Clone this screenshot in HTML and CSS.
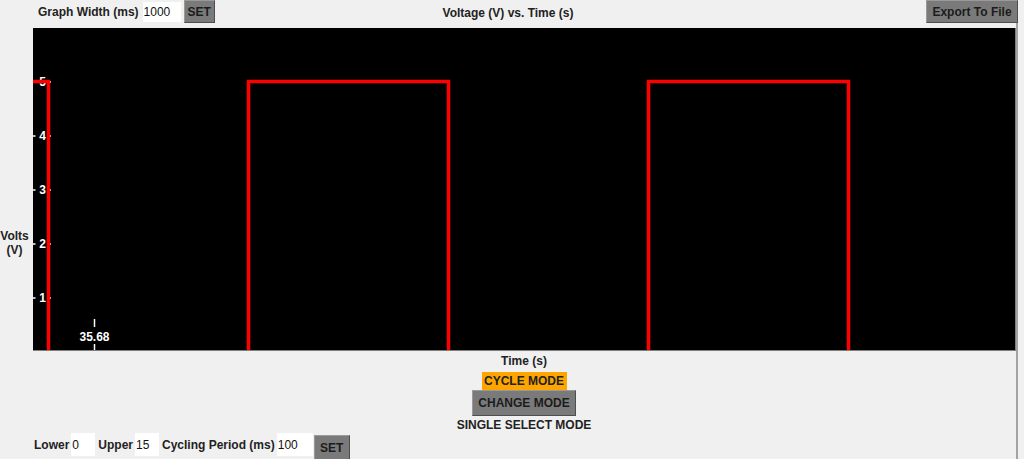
FILE: index.html
```html
<!DOCTYPE html>
<html>
<head>
<meta charset="utf-8">
<link rel="stylesheet" href="styles.css">
</head>
<body>
<div class="app">
  <div class="topbar">
    <div class="top-left">
      <span class="lbl">Graph Width (ms)</span>
      <input class="field field-gw" value="1000">
      <button class="btn btn-set">SET</button>
    </div>
    <div class="title">Voltage (V) vs. Time (s)</div>
    <div class="top-right">
      <button class="btn btn-export">Export To File</button>
    </div>
  </div>
  <div class="main">
    <div class="plot-row">
      <div class="ylabel">Volts<br>(V)</div>
      <div class="plot">
        <svg class="plot-svg" width="982" height="322" viewBox="0 0 982 322">
          <g class="ticks">
            <line x1="0" y1="54" x2="2.5" y2="54"/><line x1="16" y1="54" x2="18" y2="54"/>
            <line x1="0" y1="108" x2="2.5" y2="108"/><line x1="16" y1="108" x2="18" y2="108"/>
            <line x1="0" y1="162" x2="2.5" y2="162"/><line x1="16" y1="162" x2="18" y2="162"/>
            <line x1="0" y1="216" x2="2.5" y2="216"/><line x1="16" y1="216" x2="18" y2="216"/>
            <line x1="0" y1="270" x2="2.5" y2="270"/><line x1="16" y1="270" x2="18" y2="270"/>
            <line x1="61.5" y1="291" x2="61.5" y2="299"/>
            <line x1="61.5" y1="316" x2="61.5" y2="322"/>
          </g>
          <g class="tick-labels">
            <text x="9.5" y="54">5</text>
            <text x="9.5" y="108">4</text>
            <text x="9.5" y="162">3</text>
            <text x="9.5" y="216">2</text>
            <text x="9.5" y="270">1</text>
            <text x="61.5" y="308.5">35.68</text>
          </g>
          <path class="signal" d="M0,53.5 H15.5 V334 H215.5 V53.5 H415.5 V334 H615.5 V53.5 H815.5 V334 H982"/>
        </svg>
      </div>
    </div>
    <div class="center-stack">
      <div class="xlabel">Time (s)</div>
      <div class="cycle">CYCLE MODE</div>
      <button class="btn btn-change">CHANGE MODE</button>
      <div class="single">SINGLE SELECT MODE</div>
    </div>
    <div class="bottom-row">
      <span class="lbl">Lower</span>
      <input class="field field-sm" value="0">
      <span class="lbl">Upper</span>
      <input class="field field-sm" value="15">
      <span class="lbl">Cycling Period (ms)</span>
      <input class="field field-md" value="100">
      <button class="btn btn-set2">SET</button>
    </div>
  </div>
</div>
</body>
</html>
```

FILE: styles.css
```css
html, body {
  margin: 0;
  padding: 0;
  background: #f0f0f0;
  overflow: hidden;
}
body {
  font-family: "Liberation Sans", Arial, sans-serif;
  font-size: 12px;
  font-weight: bold;
  color: #222222;
  width: 1024px;
  height: 459px;
}
.app {
  width: 1018px;
  display: flex;
  flex-direction: column;
}
.topbar {
  height: 23px;
  display: grid;
  grid-template-columns: 1fr auto 1fr;
  align-items: start;
}
.top-left {
  display: flex;
  align-items: flex-start;
  padding-left: 38px;
}
.top-left .lbl {
  line-height: 24px;
  margin-right: 4px;
}
.title {
  line-height: 26px;
  margin-right: 2px;
}
.top-right {
  display: flex;
  justify-content: flex-end;
}
.field {
  box-sizing: border-box;
  height: 20px;
  margin-top: 2px;
  border: none;
  background: #ffffff;
  font-family: "Liberation Sans", Arial, sans-serif;
  font-size: 12px;
  font-weight: normal;
  color: #111;
  padding: 0 1px;
  outline: none;
}
.field-gw {
  width: 38px;
  margin-right: 3px;
}
.btn {
  box-sizing: border-box;
  font-family: "Liberation Sans", Arial, sans-serif;
  font-size: 12px;
  font-weight: bold;
  color: #1c1c1c;
  background: #7a7a7a;
  border: 1px solid #4e4e4e;
  border-top-color: #9a9a9a;
  border-left-color: #9a9a9a;
  padding: 0;
  margin: 0;
}
.btn-set {
  width: 31px;
  height: 23px;
}
.btn-export {
  width: 92px;
  height: 23px;
}
.main {
  width: 1016px;
  border-right: 2px solid #a3a3a3;
  height: 436px;
  display: flex;
  flex-direction: column;
}
.plot-row {
  display: flex;
  margin-top: 5px;
}
.ylabel {
  width: 29px;
  padding-right: 4px;
  text-align: center;
  line-height: 14px;
  margin-top: 201px;
}
.plot {
  width: 982px;
  height: 322px;
  background: #000;
  border-right: 1px solid #7f7f7f;
  border-bottom: 1px solid #7f7f7f;
  overflow: hidden;
}
.plot-svg {
  display: block;
}
.ticks line {
  stroke: #ffffff;
  stroke-width: 1.5;
}
.tick-labels text {
  fill: #ffffff;
  font-family: "Liberation Sans", Arial, sans-serif;
  font-size: 12px;
  font-weight: bold;
  text-anchor: middle;
  dominant-baseline: central;
}
.signal {
  fill: none;
  stroke: #ff0000;
  stroke-width: 3.5;
}
.center-stack {
  margin-left: 33px;
  width: 982px;
  display: flex;
  flex-direction: column;
  align-items: center;
}
.xlabel {
  line-height: 14px;
  margin-top: 3px;
}
.cycle {
  margin-top: 4px;
  width: 85px;
  height: 18px;
  line-height: 18px;
  background: #ffa500;
  text-align: center;
}
.btn-change {
  width: 104px;
  height: 26px;
}
.single {
  line-height: 14px;
  margin-top: 2px;
}
.bottom-row {
  display: flex;
  align-items: flex-start;
  padding-left: 34px;
  margin-top: 1px;
}
.bottom-row .lbl {
  line-height: 24px;
  margin-right: 2px;
}
.bottom-row .field {
  margin-top: 0;
  height: 23px;
  margin-right: 3px;
}
.field-sm {
  width: 24px;
}
.field-md {
  width: 36px;
}
.btn-set2 {
  width: 36px;
  height: 26px;
  margin-top: 2px;
  margin-left: -2px;
}
```
